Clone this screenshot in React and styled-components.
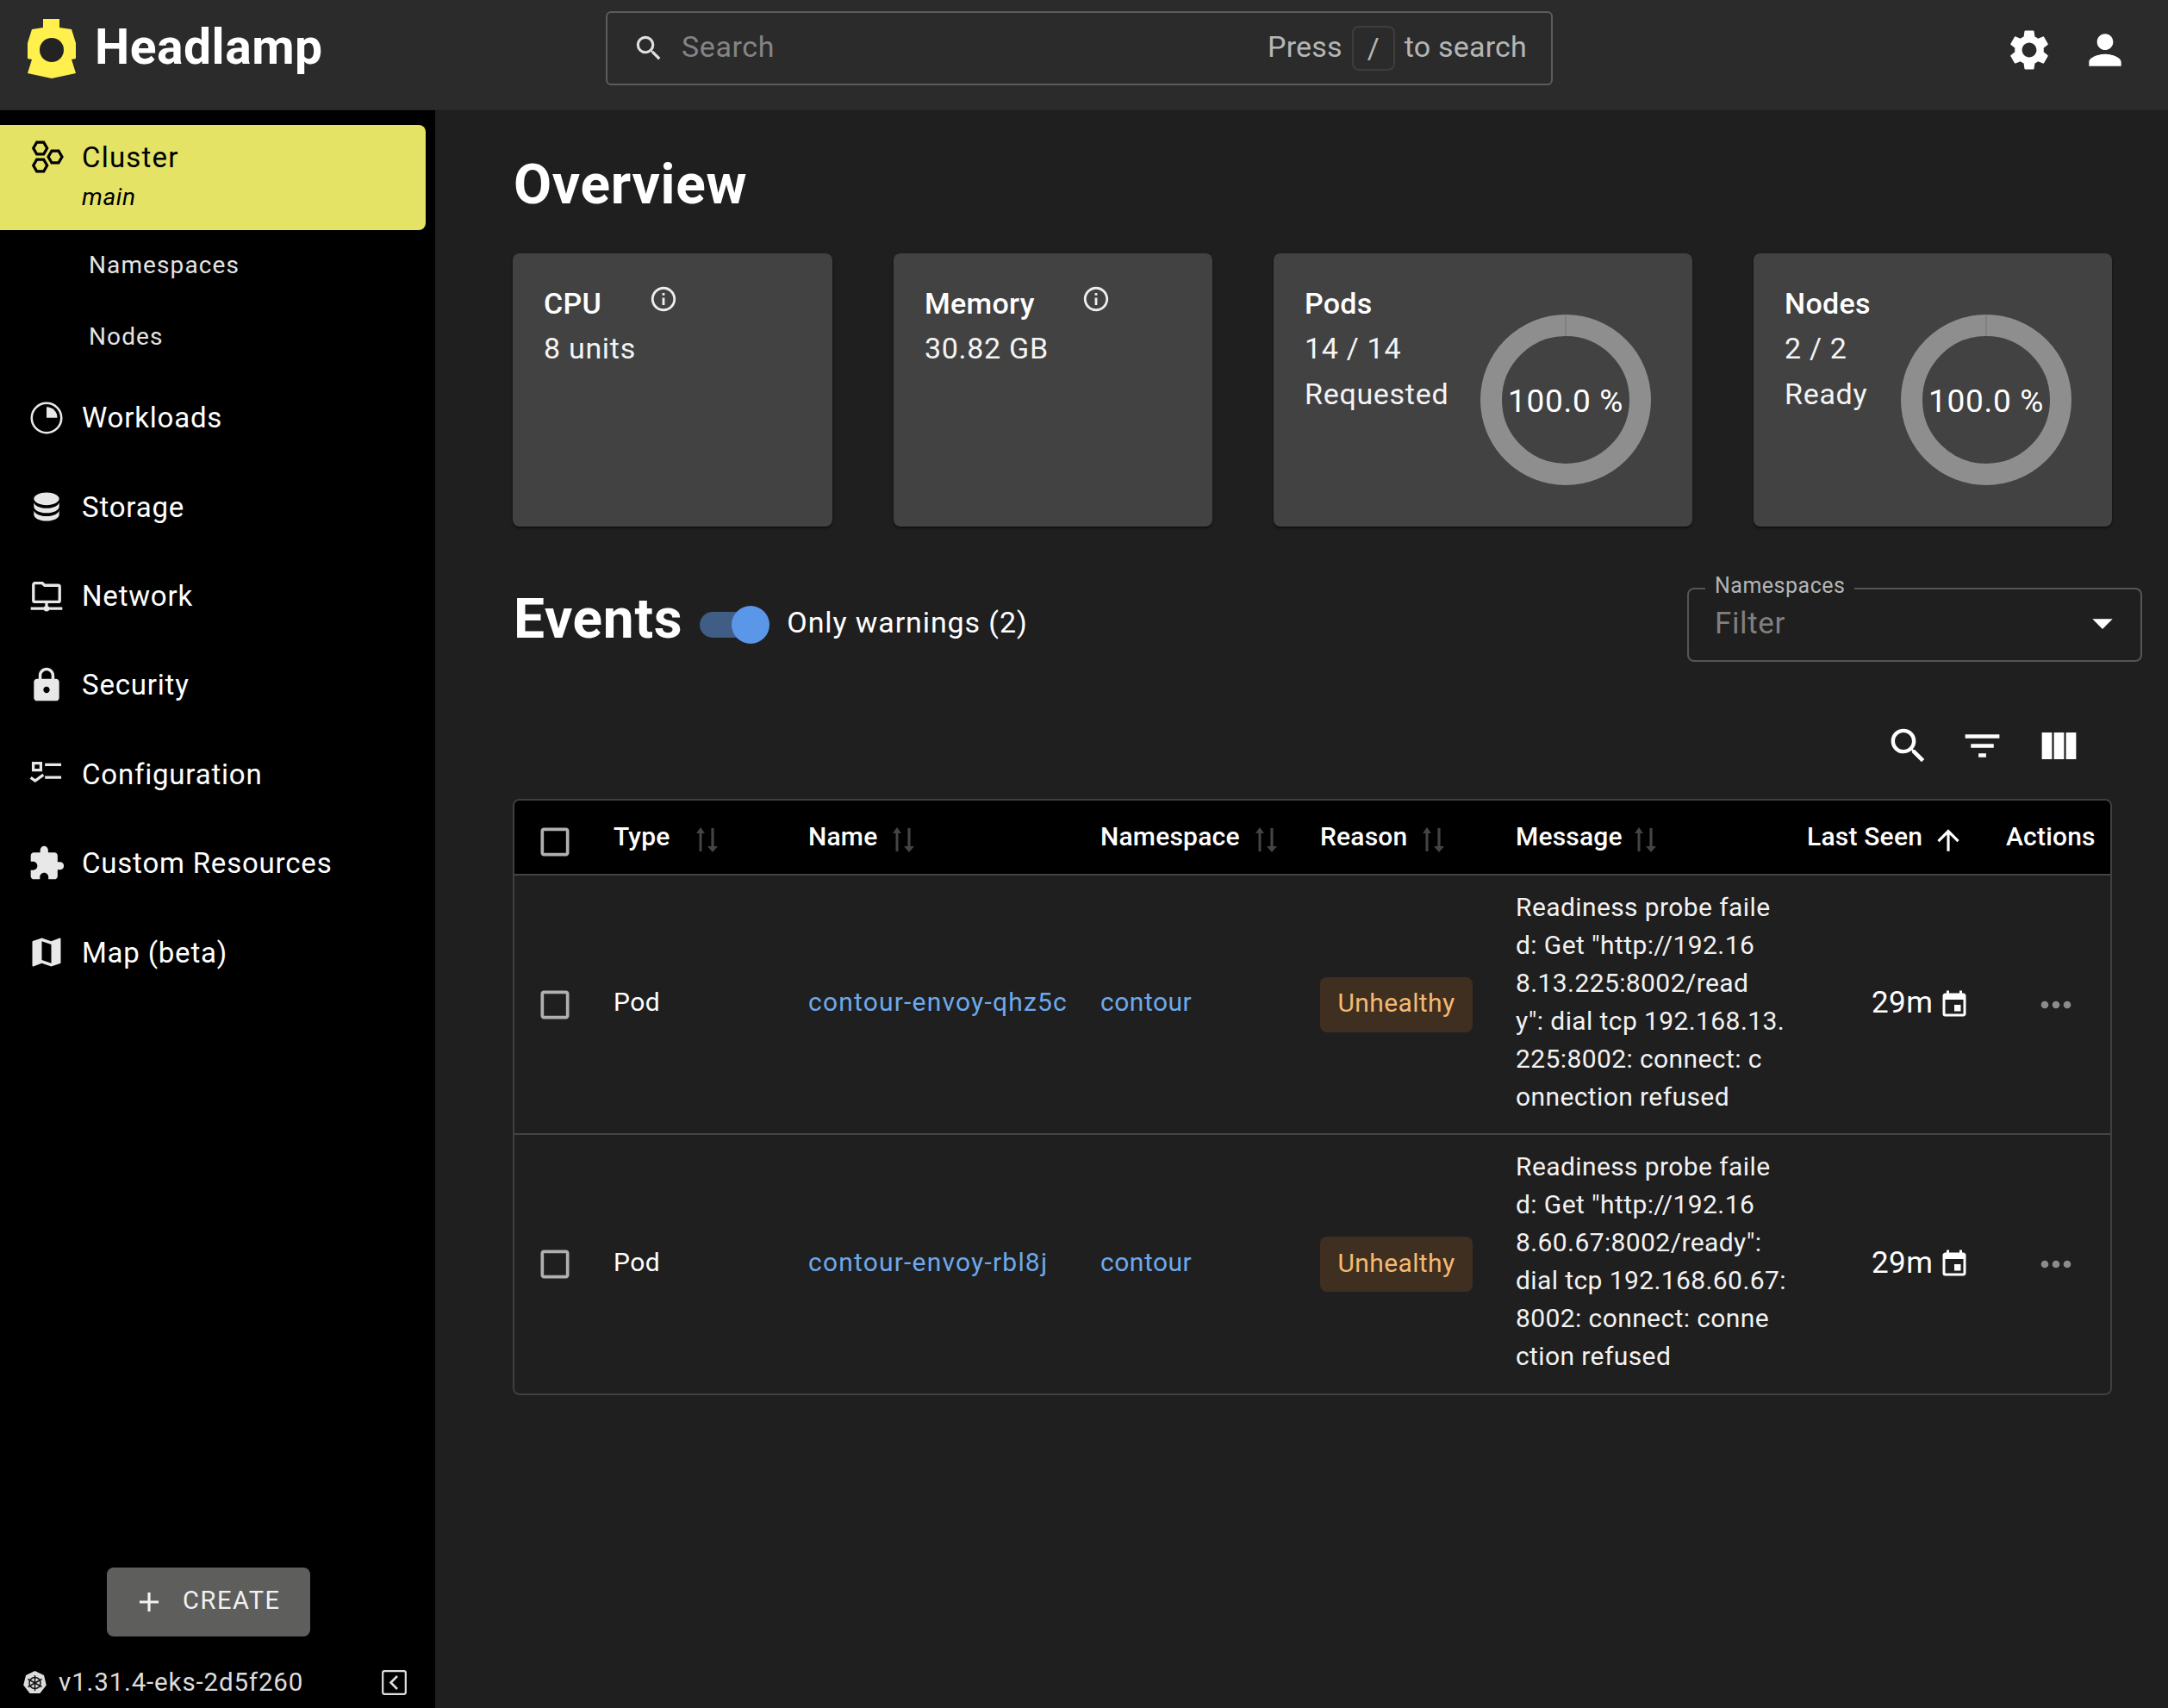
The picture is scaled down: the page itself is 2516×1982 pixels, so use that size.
import React from "react";
import styled, { createGlobalStyle } from "styled-components";
import {
  MdAdd,
  MdArrowDropDown,
  MdArrowUpward,
  MdCheckBoxOutlineBlank,
  MdEvent,
  MdExtension,
  MdFilterList,
  MdInfoOutline,
  MdLock,
  MdMap,
  MdMoreHoriz,
  MdPerson,
  MdSearch,
  MdSettings,
  MdViewColumn,
} from "react-icons/md";

const GlobalStyle = createGlobalStyle`
  * { box-sizing: border-box; }
  html, body { margin: 0; padding: 0; background: #1f1f1f; }
  body { font-family: Roboto, "Open Sans", sans-serif; color: #fff; }
`;

// drawn icons, the ones the packages don't have
const LogoIcon = () => (
  <LogoMark width="56" height="69" viewBox="0 0 56 69">
    <path
      fill="#fff04d"
      d="M18 0H37V10L51 12 56 28V46L51 47 56 63 28 69 0 63 5 47 0 46V28L5 12 18 10Z"
    />
    <circle cx="28" cy="36" r="14" fill="#232323" />
  </LogoMark>
);

const ClusterIcon = () => (
  <svg width="44" height="44" viewBox="0 0 44 44" fill="none" stroke="currentColor" strokeWidth="3.2">
    <path d="M9.7 5.1h8l4 6.9-4 6.9h-8l-4-6.9Z" />
    <path d="M9.7 25.1h8l4 6.9-4 6.9h-8l-4-6.9Z" />
    <path d="M27 15.1h8l4 6.9-4 6.9h-8l-4-6.9Z" />
  </svg>
);

const WorkloadIcon = () => (
  <svg width="44" height="44" viewBox="0 0 24 24" fill="none" stroke="currentColor" strokeWidth="1.4">
    <circle cx="12" cy="12" r="9.4" />
    <path fill="currentColor" stroke="none" d="M12 5a6.8 6.8 0 0 1 6.8 6.8H12Z" />
  </svg>
);

const StorageIcon = () => (
  <svg width="44" height="44" viewBox="0 0 24 24" fill="currentColor">
    <path d="M12,3C7.58,3 4,4.79 4,7C4,9.21 7.58,11 12,11C16.42,11 20,9.21 20,7C20,4.79 16.42,3 12,3M4,9V12C4,14.21 7.58,16 12,16C16.42,16 20,14.21 20,12V9C20,11.21 16.42,13 12,13C7.58,13 4,11.21 4,9M4,14V17C4,19.21 7.58,21 12,21C16.42,21 20,19.21 20,17V14C20,16.21 16.42,18 12,18C7.58,18 4,16.21 4,14Z" />
  </svg>
);

const NetworkIcon = () => (
  <svg width="44" height="44" viewBox="0 0 24 24" fill="none" stroke="currentColor" strokeWidth="1.8">
    <path d="M3.7 15.6V5.2a1 1 0 0 1 1-1h4.6l1.5 1.4h8.5a1 1 0 0 1 1 1v9a.4.4 0 0 1-.4.4H4.1a.4.4 0 0 1-.4-.4Z" />
    <path d="M12 16v3M2 20.3h20" />
    <circle cx="12" cy="20.3" r="1.8" fill="currentColor" stroke="none" />
  </svg>
);

const ConfigIcon = () => (
  <svg width="44" height="44" viewBox="0 0 24 24" fill="none" stroke="currentColor" strokeWidth="1.8">
    <path d="M3.6 5.2h4.8v4.4H3.6Z" />
    <path d="M11 6.2h10.3M11 14.2h10.3" />
    <path d="M2 14.4l2.8 2L10 12.6" />
  </svg>
);

const SortIcon = () => (
  <svg width="26" height="29" viewBox="0 0 26 29" fill="#444">
    <path d="M5 0l5 7H6.5v21h-3V7H0Z" />
    <path d="M19 29l-6-7h4.4V1h3.2v21H25Z" />
  </svg>
);

const KubeIcon = () => (
  <svg width="27" height="27" viewBox="0 0 27 27">
    <path fill="#ddd" d="M13.5 0l10.5 5 2.8 11.5-7.4 9.5H7.6L.2 16.5 3 5Z" />
    <g fill="none" stroke="#111" strokeWidth="1.5">
      <circle cx="13.5" cy="14" r="6.5" />
      <path d="M13.5 5v18M5.5 9.5l16 9M21.5 9.5l-16 9" />
    </g>
  </svg>
);

const CollapseIcon = () => (
  <svg width="29" height="29" viewBox="0 0 29 29" fill="none" stroke="#e0e0e0" strokeWidth="2.2">
    <rect x="1.2" y="1.2" width="26.6" height="26.6" rx="2" />
    <path d="M18 7l-7.5 7.5L18 22" strokeWidth="2.6" />
  </svg>
);

const Donut = () => (
  <DonutWrap>
    <svg width="198" height="198" viewBox="0 0 198 198">
      <circle cx="99" cy="99" r="86.5" fill="none" stroke="#8e8e8e" strokeWidth="25" />
      <path d="M99 0v25" stroke="#7d7d7d" strokeWidth="1.5" />
    </svg>
    <DonutLabel>100.0 %</DonutLabel>
  </DonutWrap>
);

const Page = styled.div`
  display: grid;
  grid-template-columns: 505px 1fr;
  grid-template-rows: 128px 1fr;
  width: 2516px;
  height: 1982px;
  overflow: hidden;
`;

const AppBar = styled.header`
  grid-column: 1 / 3;
  display: flex;
  align-items: center;
  background: #2b2b2b;
  border-bottom: 1px solid #262626;
  padding: 0 48px 16px 32px;
`;

const Brand = styled.div`
  display: flex;
  align-items: center;
  gap: 22px;
  width: 671px;
  font-size: 57px;
  font-weight: 700;
  letter-spacing: 0.5px;
  line-height: 60px;
  padding-bottom: 2px;
`;

const LogoMark = styled.svg`
  margin-top: 4px;
`;

const SearchBox = styled.div`
  display: flex;
  align-items: center;
  width: 1099px;
  height: 86px;
  border: 2px solid #5c5c5c;
  border-radius: 6px;
  padding: 0 28px 4px 28px;
  color: #b5b5b5;
  font-size: 34px;
  letter-spacing: 0.2px;
`;

const SearchGlyph = styled(MdSearch)`
  margin: 4px 0 0 1px;
`;

const SearchPlaceholder = styled.span`
  flex: 1;
  margin-left: 19px;
  color: #848484;
  letter-spacing: 0.6px;
`;

const KeyCap = styled.span`
  display: inline-flex;
  align-items: center;
  justify-content: center;
  width: 50px;
  height: 52px;
  margin: 4px 11px 0;
  border: 2px solid #3d3d3d;
  border-radius: 8px;
`;

const BarActions = styled.div`
  display: flex;
  align-items: center;
  gap: 32px;
  margin-left: auto;
  margin-right: -3px;
  margin-top: 5px;
  color: #fff;
`;

const Sidebar = styled.aside`
  display: flex;
  flex-direction: column;
  background: #000;
  padding-top: 17px;
`;

const ActiveItem = styled.div`
  display: flex;
  width: 494px;
  height: 122px;
  padding: 15px 0 0 33px;
  background: #e4e366;
  border-radius: 0 8px 8px 0;
  color: #000;
`;

const ActiveText = styled.div`
  margin-left: 18px;
  font-size: 33px;
  line-height: 46px;
  letter-spacing: 1.2px;
`;

const ClusterName = styled.div`
  font-size: 28px;
  font-style: italic;
  line-height: 46px;
  letter-spacing: 0.6px;
`;

const SubItem = styled.div`
  display: flex;
  align-items: center;
  height: 83px;
  padding-left: 103px;
  padding-bottom: 2px;
  color: #e4e4e4;
  font-size: 28px;
  letter-spacing: 1.1px;
`;

const NavItem = styled.div`
  display: flex;
  align-items: center;
  height: 103.4px;
  padding-left: 32px;
  color: #e8e8e8;
`;

const NavLabel = styled.span`
  margin-left: 19px;
  color: #fff;
  font-size: 33px;
  letter-spacing: 0.8px;
`;

const CreateButton = styled.div`
  display: flex;
  align-items: center;
  width: 236px;
  height: 80px;
  margin: auto 0 23px 124px;
  padding-left: 30px;
  background: #5e5e5c;
  border-radius: 8px;
  color: #f2f2f2;
  font-size: 29px;
  letter-spacing: 1.6px;
`;

const CreateLabel = styled.span`
  margin: 0 0 5px 20px;
`;

const VersionRow = styled.div`
  display: flex;
  align-items: center;
  height: 60px;
  padding: 0 33px 0 27px;
  color: #dcdcdc;
  font-size: 29.5px;
  letter-spacing: 0.85px;
`;

const VersionText = styled.span`
  flex: 1;
  margin-left: 14px;
`;

const Main = styled.main`
  padding: 55px 30px 0 90px;
  background: #1f1f1f;
`;

const Title = styled.h1`
  margin: 0 0 ${(p) => p.$lift || 0}px 1px;
  font-size: 64px;
  line-height: 64px;
  font-weight: 700;
  letter-spacing: 0.7px;
`;

const Cards = styled.div`
  display: grid;
  grid-template-columns: 371px 370px 486px 416px;
  gap: 71px;
  margin-top: 47px;
`;

const Card = styled.div`
  display: flex;
  justify-content: space-between;
  height: 317px;
  padding: 32px ${(p) => p.$right || 36}px 0 36px;
  background: #424242;
  border-radius: 8px;
  box-shadow: 0 2px 3px rgba(0, 0, 0, 0.5);
`;

const CardHead = styled.div`
  display: flex;
  align-items: flex-start;
  font-size: 34px;
  font-weight: 500;
  line-height: 52px;
  letter-spacing: 0.3px;
`;

const InfoMark = styled.span`
  display: inline-flex;
  margin-left: ${(p) => p.$gap}px;
  margin-top: 4px;
  color: #eee;
`;

const CardLine = styled.div`
  font-size: 34px;
  line-height: 53px;
  letter-spacing: 0.7px;
  color: #f4f4f4;
`;

const DonutWrap = styled.div`
  position: relative;
  width: 198px;
  height: 198px;
  margin-top: 39px;
`;

const DonutLabel = styled.div`
  position: absolute;
  inset: 2px 0 0 0;
  display: flex;
  align-items: center;
  justify-content: center;
  font-size: 37px;
  letter-spacing: 0.7px;
`;

const EventsHead = styled.div`
  display: flex;
  align-items: center;
  height: 86px;
  margin-top: 71px;
`;

const Toggle = styled.div`
  position: relative;
  width: 80px;
  height: 30px;
  margin: 0 0 0 20px;
  background: #3f5d85;
  border-radius: 15px;
`;

const Thumb = styled.span`
  position: absolute;
  top: -7px;
  right: -1px;
  width: 44px;
  height: 44px;
  background: #5a97e8;
  border-radius: 50%;
`;

const ToggleLabel = styled.span`
  margin: 0 0 6px 21px;
  font-size: 34px;
  letter-spacing: 0.9px;
`;

const NsSelect = styled.div`
  position: relative;
  display: flex;
  align-items: center;
  justify-content: space-between;
  width: 528px;
  height: 86px;
  margin-left: auto;
  padding: 0 16px 4px 30px;
  border: 2px solid #555;
  border-radius: 8px;
  color: #7f7f7f;
  font-size: 35px;
  letter-spacing: 0.6px;
`;

const NsLabel = styled.span`
  position: absolute;
  top: -19px;
  left: 19px;
  padding: 0 11px;
  background: #1f1f1f;
  color: #b5b5b5;
  font-size: 25px;
  line-height: 30px;
  letter-spacing: 0.5px;
`;

const Toolbar = styled.div`
  display: flex;
  justify-content: flex-end;
  gap: 36px;
  width: 1855px;
  margin-top: 71px;
  padding-right: 34px;
`;

const ToolSearch = styled(MdSearch)`
  margin-right: -3px;
`;

const TableFrame = styled.div`
  width: 1856px;
  margin-top: 35px;
  border: 2px solid #3f3f3f;
  border-radius: 8px;
  overflow: hidden;
`;

const Table = styled.table`
  width: 100%;
  table-layout: fixed;
  border-collapse: collapse;
`;

const HeadRow = styled.tr`
  height: 86px;
  background: #000;
`;

const HeadCell = styled.th`
  padding: 0 0 2px;
  font-size: 30px;
  font-weight: 500;
  letter-spacing: 0.2px;
  text-align: left;
`;

const HeadInner = styled.div`
  display: flex;
  align-items: center;
  gap: ${(p) => p.$gap || 18}px;
`;

const SortMark = styled.span`
  display: inline-flex;
  margin-top: 8px;
`;

const BodyRow = styled.tr`
  height: 301px;
  border-top: 2px solid #444;
`;

const Cell = styled.td`
  padding: 0;
  font-size: 30px;
  letter-spacing: 0.4px;
  vertical-align: middle;
`;

const CellText = styled.div`
  padding-bottom: 6px;
`;

const CheckCell = styled.div`
  display: flex;
  justify-content: center;
  margin-left: -21px;
  margin-top: ${(p) => p.$top || 0}px;
  color: #b0b0b0;
`;

const LinkText = styled.span`
  color: #6ea9ea;
  letter-spacing: ${(p) => p.$spacing || 0.5}px;
`;

const Badge = styled.span`
  display: inline-flex;
  align-items: center;
  justify-content: center;
  width: 177px;
  height: 64px;
  padding-bottom: 4px;
  background: #3e2f21;
  border-radius: 8px;
  color: #f5b971;
`;

const MessageLines = styled.div`
  padding-bottom: 6px;
  line-height: 44px;
  color: #f2f2f2;
`;

const AgeCell = styled.div`
  display: flex;
  align-items: center;
  gap: 7px;
  padding-left: 75px;
  font-size: 35px;
`;

const AgeText = styled.span`
  padding-bottom: 4px;
`;

const Dots = styled.div`
  display: flex;
  padding-left: 32px;
  color: #8c8c8c;
`;

const navItems = [
  ["Workloads", <WorkloadIcon />],
  ["Storage", <StorageIcon />],
  ["Network", <NetworkIcon />],
  ["Security", <MdLock size={44} />],
  ["Configuration", <ConfigIcon />],
  ["Custom Resources", <MdExtension size={44} />],
  ["Map (beta)", <MdMap size={44} />],
];

const columns = [
  ["Type", 30],
  ["Name", 18],
  ["Namespace", 18],
  ["Reason", 18],
  ["Message", 14],
];

const events = [
  {
    name: "contour-envoy-qhz5c",
    message: [
      "Readiness probe faile",
      'd: Get "http://192.16',
      "8.13.225:8002/read",
      'y": dial tcp 192.168.13.',
      "225:8002: connect: c",
      "onnection refused",
    ],
  },
  {
    name: "contour-envoy-rbl8j",
    message: [
      "Readiness probe faile",
      'd: Get "http://192.16',
      '8.60.67:8002/ready":',
      "dial tcp 192.168.60.67:",
      "8002: connect: conne",
      "ction refused",
    ],
  },
];

const App = () => {
  return (
    <Page>
      <GlobalStyle />
      <AppBar>
        <Brand>
          <LogoIcon />
          Headlamp
        </Brand>
        <SearchBox>
          <SearchGlyph size={38} color="#e0e0e0" />
          <SearchPlaceholder>Search</SearchPlaceholder>
          Press
          <KeyCap>/</KeyCap>
          to search
        </SearchBox>
        <BarActions>
          <MdSettings size={56} />
          <MdPerson size={56} />
        </BarActions>
      </AppBar>

      <Sidebar>
        <ActiveItem>
          <ClusterIcon />
          <ActiveText>
            Cluster
            <ClusterName>main</ClusterName>
          </ActiveText>
        </ActiveItem>
        <SubItem>Namespaces</SubItem>
        <SubItem>Nodes</SubItem>
        {navItems.map(([label, icon]) => (
          <NavItem key={label}>
            {icon}
            <NavLabel>{label}</NavLabel>
          </NavItem>
        ))}
        <CreateButton>
          <MdAdd size={38} />
          <CreateLabel>CREATE</CreateLabel>
        </CreateButton>
        <VersionRow>
          <KubeIcon />
          <VersionText>v1.31.4-eks-2d5f260</VersionText>
          <CollapseIcon />
        </VersionRow>
      </Sidebar>

      <Main>
        <Title>Overview</Title>
        <Cards>
          <Card>
            <div>
              <CardHead>
                CPU
                <InfoMark $gap={55}>
                  <MdInfoOutline size={34} />
                </InfoMark>
              </CardHead>
              <CardLine>8 units</CardLine>
            </div>
          </Card>
          <Card>
            <div>
              <CardHead>
                Memory
                <InfoMark $gap={54}>
                  <MdInfoOutline size={34} />
                </InfoMark>
              </CardHead>
              <CardLine>30.82 GB</CardLine>
            </div>
          </Card>
          <Card $right={48}>
            <div>
              <CardHead>Pods</CardHead>
              <CardLine>14 / 14</CardLine>
              <CardLine>Requested</CardLine>
            </div>
            <Donut />
          </Card>
          <Card $right={47}>
            <div>
              <CardHead>Nodes</CardHead>
              <CardLine>2 / 2</CardLine>
              <CardLine>Ready</CardLine>
            </div>
            <Donut />
          </Card>
        </Cards>

        <EventsHead>
          <Title $lift={12}>Events</Title>
          <Toggle>
            <Thumb />
          </Toggle>
          <ToggleLabel>Only warnings (2)</ToggleLabel>
          <NsSelect>
            <NsLabel>Namespaces</NsLabel>
            Filter
            <MdArrowDropDown size={56} color="#fff" />
          </NsSelect>
        </EventsHead>

        <Toolbar>
          <ToolSearch size={53} />
          <MdFilterList size={53} />
          <MdViewColumn size={53} />
        </Toolbar>

        <TableFrame>
          <Table>
            <colgroup>
              <col width="115" />
              <col width="226" />
              <col width="339" />
              <col width="255" />
              <col width="227" />
              <col width="338" />
              <col width="231" />
              <col width="121" />
            </colgroup>
            <thead>
              <HeadRow>
                <HeadCell>
                  <CheckCell $top={12}>
                    <MdCheckBoxOutlineBlank size={44} />
                  </CheckCell>
                </HeadCell>
                {columns.map(([label, gap]) => (
                  <HeadCell key={label}>
                    <HeadInner $gap={gap}>
                      {label}
                      <SortMark>
                        <SortIcon />
                      </SortMark>
                    </HeadInner>
                  </HeadCell>
                ))}
                <HeadCell>
                  <HeadInner $gap={11}>
                    Last Seen
                    <SortMark>
                      <MdArrowUpward size={38} />
                    </SortMark>
                  </HeadInner>
                </HeadCell>
                <HeadCell>Actions</HeadCell>
              </HeadRow>
            </thead>
            <tbody>
              {events.map((event) => (
                <BodyRow key={event.name}>
                  <Cell>
                    <CheckCell>
                      <MdCheckBoxOutlineBlank size={44} />
                    </CheckCell>
                  </Cell>
                  <Cell>
                    <CellText>Pod</CellText>
                  </Cell>
                  <Cell>
                    <CellText>
                      <LinkText $spacing={1.2}>{event.name}</LinkText>
                    </CellText>
                  </Cell>
                  <Cell>
                    <CellText>
                      <LinkText>contour</LinkText>
                    </CellText>
                  </Cell>
                  <Cell>
                    <Badge>Unhealthy</Badge>
                  </Cell>
                  <Cell>
                    <MessageLines>
                      {event.message.map((line) => (
                        <div key={line}>{line}</div>
                      ))}
                    </MessageLines>
                  </Cell>
                  <Cell>
                    <AgeCell>
                      <AgeText>29m</AgeText>
                      <MdEvent size={36} />
                    </AgeCell>
                  </Cell>
                  <Cell>
                    <Dots>
                      <MdMoreHoriz size={52} />
                    </Dots>
                  </Cell>
                </BodyRow>
              ))}
            </tbody>
          </Table>
        </TableFrame>
      </Main>
    </Page>
  );
};

export default App;
